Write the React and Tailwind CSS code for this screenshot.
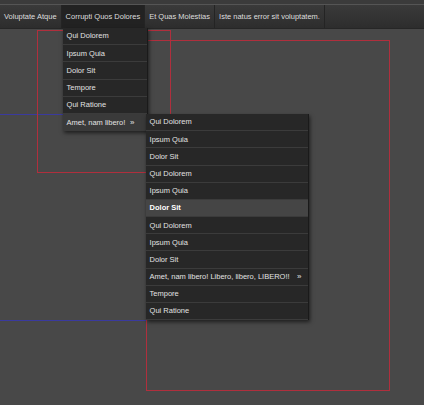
import React from 'react';

const nav = ['Voluptate Atque', 'Corrupti Quos Dolores', 'Et Quas Molestias', 'Iste natus error sit voluptatem.'];
const menu1 = ['Qui Dolorem', 'Ipsum Quia', 'Dolor Sit', 'Tempore', 'Qui Ratione'];
const menu2 = [
  'Qui Dolorem', 'Ipsum Quia', 'Dolor Sit', 'Qui Dolorem', 'Ipsum Quia', 'Dolor Sit',
  'Qui Dolorem', 'Ipsum Quia', 'Dolor Sit', 'Amet, nam libero! Libero, libero, LIBERO!!', 'Tempore', 'Qui Ratione',
];

const Item = ({ label, active, bold, sub }) => (
  <li
    className={`flex items-center justify-between h-[17.2px] px-[4px] border-b border-[#3b3b3b] ${
      active ? 'bg-[#454545]' : 'bg-[#272727]'
    } ${bold ? 'font-bold text-white' : 'text-[#e2e2e2]'}`}
  >
    <span>{label}</span>
    {sub && <span className="text-[8px] pr-[2px]">»</span>}
  </li>
);

const Dropdown = () => (
  <ul className="absolute left-[1px] top-full w-[85px] z-20 shadow-[1px_2px_4px_rgba(0,0,0,0.6)] border-r border-[#1a1a1a]">
    {menu1.map((m) => (
      <Item key={m} label={m} />
    ))}
    <li className="relative flex items-center justify-between h-[17.2px] px-[4px] bg-[#3a3a3a] text-[#e2e2e2]">
      <span>Amet, nam libero!</span>
      <span className="text-[8px] pr-[8px]">»</span>
      <ul className="absolute left-[calc(100%-1px)] top-0 w-[163px] shadow-[1px_2px_4px_rgba(0,0,0,0.6)] border-r border-[#1a1a1a]">
        {menu2.map((m, i) => (
          <Item key={i} label={m} active={i === 5} bold={i === 5} sub={i === 9} />
        ))}
      </ul>
    </li>
  </ul>
);

export default function App() {
  return (
    <div
      className="relative w-[424px] h-[405px] overflow-hidden bg-[#484848] text-[7.5px]"
      style={{ fontFamily: '"Liberation Sans", Arial, sans-serif' }}
    >
      <div className="h-[5px] bg-[#3b3b3b] border-b border-[#555]" />
      <nav className="relative z-10 flex h-[24px] bg-gradient-to-b from-[#3a3a3a] to-[#2d2d2d] border-b border-[#262626]">
        {nav.map((n, i) => (
          <div
            key={n}
            className={`relative flex items-center px-[4px] border-r border-[#242424] text-[#dedede] ${
              i === 1 ? 'bg-[#222]' : ''
            }`}
          >
            {n}
            {i === 1 && <Dropdown />}
          </div>
        ))}
      </nav>

      {/* debug outlines lying under the menus */}
      <div className="absolute left-0 top-[114px] w-[146px] h-[207px] border-y border-[#3a3a9e]" />
      <div className="absolute left-[37px] top-[30px] w-[134px] h-[143px] border border-[#b02f3d]" />
      <div className="absolute left-[146px] top-[40px] w-[244px] h-[351px] border border-[#b02f3d]" />
    </div>
  );
}
